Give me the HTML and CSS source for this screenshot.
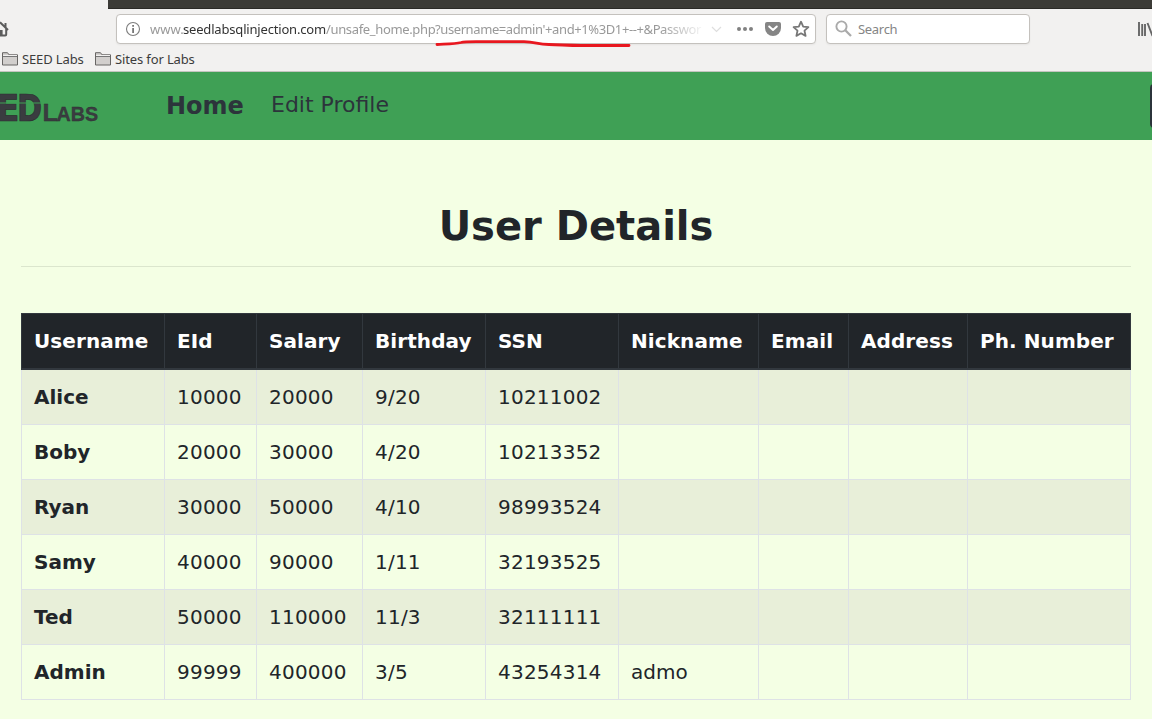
FILE: index.html
```html
<!DOCTYPE html>
<html lang="en">
<head>
<meta charset="utf-8">
<title>SEED Labs – User Details</title>
<link rel="stylesheet" href="styles.css">
</head>
<body>
<header class="chrome">
  <div class="tabstrip"></div>
  <div class="toolbar">
    <svg class="home" width="10" height="18" viewBox="0 0 10 18"><path d="M0 2.300 8 10M5.500 3v4M6.200 8V14.500Q6.200 15.500 5.200 15.500H0" fill="none" stroke="#5c5c5c" stroke-width="2"/><path d="M0 10h2.600v5H0z" fill="#5c5c5c"/></svg>
    <div class="urlbar">
      <svg class="info" width="16" height="16" viewBox="0 0 16 16"><circle cx="8" cy="8" r="6.500" fill="none" stroke="#7d7d7d" stroke-width="1.100"/><path d="M7.200 4h1.800v1.800H7.200zM7.200 7h1.800v5H7.200z" fill="#777"/></svg>
      <div class="url"><span class="u1">www.</span><span class="u2">seedlabsqlinjection.com</span><span class="u3">/unsafe_home.php</span><span class="u4">?username=admin'+and+1%3D1+--+&amp;Passwor</span></div>
      <svg class="actions" width="108" height="20" viewBox="0 0 108 20"><path d="M4 8l4.500 4.500L13 8" fill="none" stroke="#dedede" stroke-width="1.200"/><g fill="#818181"><circle cx="31" cy="10" r="2"/><circle cx="37" cy="10" r="2"/><circle cx="43" cy="10" r="2"/></g><path d="M59 3H71q2 0 2 2V9a8 8 0 0 1-16 0V5q0-2 2-2z" fill="#858585"/><path d="M61.200 7.500 65 11l3.800-3.500" fill="none" stroke="#fff" stroke-width="2" stroke-linecap="round" stroke-linejoin="round"/><path d="M93 2.700l2.200 4.900 5.200.6-3.900 3.500 1.100 5.200-4.600-2.600-4.600 2.600 1.100-5.200-3.900-3.500 5.200-.6z" fill="none" stroke="#777" stroke-width="1.800" stroke-linejoin="round"/></svg>
      <svg class="mark" width="200" height="10" viewBox="0 0 200 10"><path d="M4 5.500C12 5 22 5 28 3.500C32 2.300 40 2.600 50 2.600H91C103 2.700 104 5.500 116 5.500C129 5.800 135 6.500 148 6.500H196" fill="none" stroke="#e8171f" stroke-width="2.800" stroke-linecap="round"/></svg>
    </div>
    <div class="search">
      <svg width="18" height="18" viewBox="0 0 18 18"><circle cx="6.500" cy="6.500" r="5.100" fill="none" stroke="#aaa" stroke-width="1.900"/><path d="M10.300 10.300 16 16" stroke="#aaa" stroke-width="2.300"/></svg>
      <span>Search</span>
    </div>
    <svg class="library" width="15" height="16" viewBox="0 0 15 16"><path d="M2 1v14M5.200 3v12M8 3v12M10.500 2l5 13" fill="none" stroke="#666" stroke-width="1.900"/></svg>
  </div>
  <nav class="bookmarks">
    <svg class="folder" width="16" height="14" viewBox="0 0 16 14"><path d="M.5 13V.7H5.500L7 2.800H15.500V13z" fill="#d2cfcd" stroke="#686664"/><path d="M1 4.500h14" stroke="#777"/><path d="M1 3.500h14" stroke="#f2f1f0"/></svg>
    <span class="b1">SEED Labs</span>
    <svg class="folder second" width="16" height="14" viewBox="0 0 16 14"><path d="M.5 13V.7H5.500L7 2.800H15.500V13z" fill="#d2cfcd" stroke="#686664"/><path d="M1 4.500h14" stroke="#777"/><path d="M1 3.500h14" stroke="#f2f1f0"/></svg>
    <span class="b2">Sites for Labs</span>
  </nav>
</header>
<nav class="navbar">
  <div class="logo">
    <svg width="43" height="36" viewBox="0 0 43 36"><text class="mark-text" transform="translate(-4 30) scale(.93 1)" font-size="37">E</text><text class="mark-text" transform="translate(17 30) scale(.82 1)" font-size="37">D</text><path d="M0 12H42" stroke="#3fa055" stroke-width="1.200"/></svg>
    <svg width="57" height="36" viewBox="0 0 57 36"><text class="mark-text small" transform="translate(-.5 30) scale(1.050 1)" font-size="24">L</text><text class="mark-text small" transform="translate(13.500 30) scale(.940 1)" font-size="21">ABS</text></svg>
  </div>
  <a class="active">Home</a>
  <a class="edit">Edit Profile</a>
  <span class="logout"></span>
</nav>
<main>
  <h1>User Details</h1>
  <hr>
  <table>
    <colgroup><col class="c1"><col class="c2"><col class="c3"><col class="c4"><col class="c5"><col class="c6"><col class="c7"><col class="c8"><col class="c9"></colgroup>
    <thead><tr><th>Username</th><th>EId</th><th>Salary</th><th>Birthday</th><th>SSN</th><th>Nickname</th><th>Email</th><th>Address</th><th>Ph. Number</th></tr></thead>
    <tbody>
      <tr><th>Alice</th><td>10000</td><td>20000</td><td>9/20</td><td>10211002</td><td></td><td></td><td></td><td></td></tr>
      <tr><th>Boby</th><td>20000</td><td>30000</td><td>4/20</td><td>10213352</td><td></td><td></td><td></td><td></td></tr>
      <tr><th>Ryan</th><td>30000</td><td>50000</td><td>4/10</td><td>98993524</td><td></td><td></td><td></td><td></td></tr>
      <tr><th>Samy</th><td>40000</td><td>90000</td><td>1/11</td><td>32193525</td><td></td><td></td><td></td><td></td></tr>
      <tr><th>Ted</th><td>50000</td><td>110000</td><td>11/3</td><td>32111111</td><td></td><td></td><td></td><td></td></tr>
      <tr><th>Admin</th><td>99999</td><td>400000</td><td>3/5</td><td>43254314</td><td class="nick">admo</td><td></td><td></td><td></td></tr>
    </tbody>
  </table>
</main>
</body>
</html>
```
FILE: styles.css
```css
* { box-sizing: border-box; }
html, body { margin: 0; height: 719px; overflow: hidden; }
body { background: #f4ffe4; color: #212529; font: 20px/30px "DejaVu Sans", sans-serif; }
svg { display: block; flex: none; }
.chrome { height: 72px; background: #f2f1f0; border-bottom: 1px solid #c3c5bf; font: 13px/20px "Noto Sans", sans-serif; color: #3c3c3c; }
.tabstrip { height: 9px; margin-left: 108px; background: #3c3b37; border-bottom: 1px solid #2b2a27; }
.toolbar { display: flex; height: 39px; padding-top: 5px; }
.home { margin: 6px 106px 0 0; }
.urlbar, .search { display: flex; align-items: center; height: 30px; background: #fff; border: 1px solid #c4c1bd; border-radius: 4px; box-shadow: 0 1px 2px #0000000d; }
.urlbar { position: relative; width: 700px; padding-left: 8px; }
.url { display: flex; flex: none; width: 557px; margin-left: 9px; overflow: hidden; white-space: pre; color: #999; -webkit-mask-image: linear-gradient(to right, #000 510px, transparent 556px); mask-image: linear-gradient(to right, #000 510px, transparent 556px); }
.url span { flex: none; }
.u1 { width: 33px; }
.u2 { width: 143px; color: #333; letter-spacing: -.18px; }
.u3 { width: 109px; letter-spacing: -.35px; }
.u4 { letter-spacing: -.4px; }
.mark { position: absolute; left: 316px; top: 24px; }
.actions { margin-left: 1px; }
.search { width: 204px; margin-left: 10px; padding-left: 8px; color: #858585; }
.search span { margin-left: 5px; letter-spacing: -.3px; }
.library { margin: 7px 0 0 107px; }
.bookmarks { display: flex; align-items: center; height: 21px; padding-left: 2px; white-space: nowrap; letter-spacing: -.13px; }
.bookmarks span { margin-left: 4px; }
.b1 { width: 61px; }
.second { margin-left: 12px; }
.navbar { display: flex; height: 68px; background: #3fa055; color: #2c343b; white-space: nowrap; overflow: hidden; }
.logo { display: flex; margin-top: 19px; }
.mark-text { font-family: "DejaVu Sans", sans-serif; font-weight: 700; fill: #3a3c40; stroke: #2b2d30; stroke-width: .7px; }
.small { stroke-width: .3px; }
.small { font-family: "Liberation Sans", sans-serif; }
.active { margin: 19px 0 0 66px; width: 105px; font-weight: 700; font-size: 24px; }
.edit { margin-top: 18px; font-size: 22px; }
.logout { flex: none; width: 80px; height: 44px; margin: 12px -78px 0 auto; background: #2b343b; border-radius: 4px; }
main { padding: 62px 21px 0; }
h1 { margin: 0; text-align: center; font-size: 40px; line-height: 48px; }
hr { height: 1px; margin: 16px 0 46px; border: 0; background: #dbe6cd; }
table { width: 1110px; table-layout: fixed; border-collapse: collapse; }
th, td { height: 55px; padding: 0 12px; border: 1px solid #dee2e6; text-align: left; white-space: nowrap; }
td { letter-spacing: .22px; }
.nick { letter-spacing: 0; }
thead th { height: 55px; color: #fff; background: #212529; border: 1px solid #32383e; border-bottom-width: 2px; letter-spacing: .08px; padding-top: 1px; }
tbody tr:first-child > * { height: 56px; }
tbody tr:nth-child(odd) { background: #e8efd9; }
.c1 { width: 143px; }
.c2 { width: 92px; }
.c3 { width: 106px; }
.c4 { width: 123px; }
.c5 { width: 133px; }
.c6 { width: 140px; }
.c7 { width: 90px; }
.c8 { width: 119px; }
.c9 { width: 163px; }
```
